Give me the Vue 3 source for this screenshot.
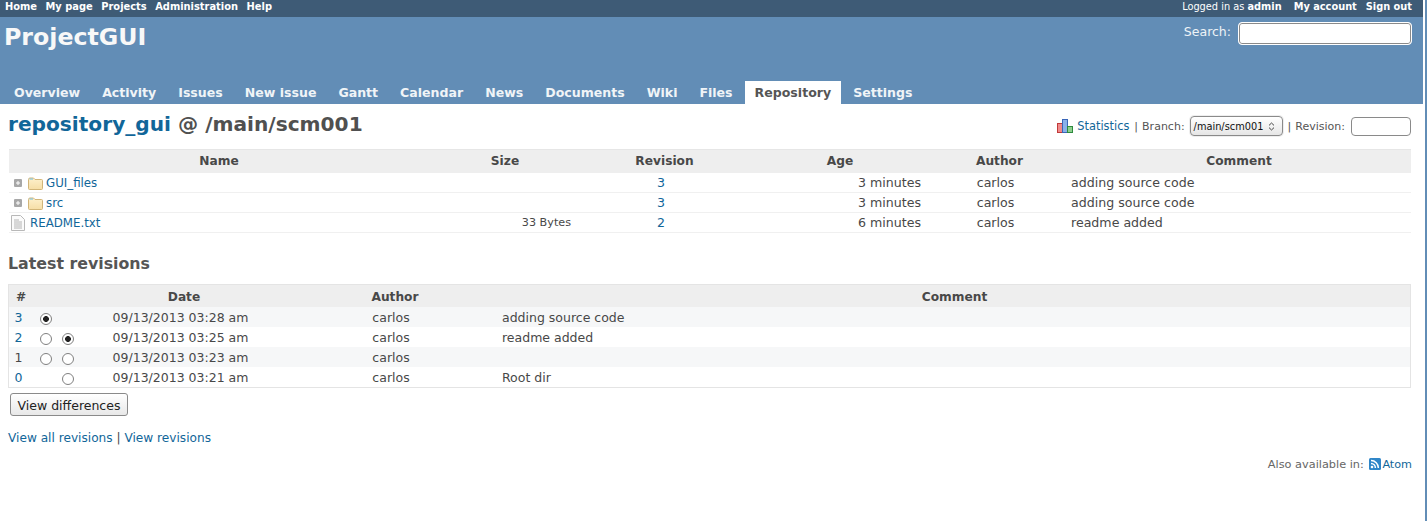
<script setup>
const tabs = ['Overview','Activity','Issues','New issue','Gantt','Calendar','News','Documents','Wiki','Files','Repository','Settings']
const entries = [
  { name:'GUI_files', dir:true, size:'', rev:'3', age:'3 minutes', author:'carlos', comment:'adding source code' },
  { name:'src', dir:true, size:'', rev:'3', age:'3 minutes', author:'carlos', comment:'adding source code' },
  { name:'README.txt', dir:false, size:'33 Bytes', rev:'2', age:'6 minutes', author:'carlos', comment:'readme added' },
]
const revs = [
  { id:'3', link:true, a:'on', b:'', date:'09/13/2013 03:28 am', comment:'adding source code' },
  { id:'2', link:true, a:'off', b:'on', date:'09/13/2013 03:25 am', comment:'readme added' },
  { id:'1', link:false, a:'off', b:'off', date:'09/13/2013 03:23 am', comment:'' },
  { id:'0', link:true, a:'', b:'off', date:'09/13/2013 03:21 am', comment:'Root dir' },
]
</script>

<template>
  <div class="page">
    <div class="main">
      <div class="topmenu">
        <div class="tm-left"><a>Home</a><a>My page</a><a>Projects</a><a>Administration</a><a>Help</a></div>
        <div class="tm-right"><span class="logged">Logged in as <b>admin</b></span><a>My account</a><a>Sign out</a></div>
      </div>
      <div class="header">
        <div class="head-row">
          <h1>ProjectGUI</h1>
          <div class="search"><span>Search:</span><span class="search-input"></span></div>
        </div>
        <div class="tabs">
          <a v-for="t in tabs" :key="t" :class="{ sel: t === 'Repository' }">{{ t }}</a>
        </div>
      </div>
      <div class="content">
        <div class="title-row">
          <h2><a>repository_gui</a> @ /main/scm001</h2>
          <div class="ctx">
            <svg class="stat" width="16" height="16" viewBox="0 0 16 16">
              <rect x="0.5" y="5.5" width="5" height="9" fill="#f08a8a" stroke="#c03a3a"/>
              <rect x="5.5" y="1.5" width="5" height="13" fill="#8ab0ea" stroke="#3a66b8"/>
              <rect x="10.5" y="8.5" width="5" height="6" fill="#8ed08e" stroke="#2e8a3e"/>
            </svg>
            <a class="stat-link">Statistics</a><span class="sep">|</span><span>Branch:</span>
            <span class="select">/main/scm001<svg width="7" height="9" viewBox="0 0 7 9"><path d="M1 3.4 3.5 1 6 3.4M1 5.6 3.5 8 6 5.6" fill="none" stroke="#444" stroke-width="1"/></svg></span>
            <span class="sep">|</span><span>Revision:</span><span class="rev-input"></span>
          </div>
        </div>

        <table class="entries">
          <colgroup><col style="width:420px"><col style="width:152px"><col style="width:167px"><col style="width:184px"><col style="width:135px"><col></colgroup>
          <thead><tr><th>Name</th><th>Size</th><th>Revision</th><th>Age</th><th>Author</th><th>Comment</th></tr></thead>
          <tbody>
            <tr v-for="e in entries" :key="e.name">
              <td>
                <div class="fname">
                  <template v-if="e.dir">
                    <svg class="exp" width="8" height="8" viewBox="0 0 8 8"><rect width="8" height="8" rx="1" fill="#a8a8a8"/><path d="M2 4h4M4 2v4" stroke="#fff" stroke-width="1"/></svg>
                    <svg class="folder" width="15" height="13" viewBox="0 0 15 13"><defs><linearGradient id="fg" x1="0" y1="0" x2="0" y2="1"><stop offset="0" stop-color="#fdf0cc"/><stop offset="1" stop-color="#f6deA6"/></linearGradient></defs><path d="M.5 2.5 Q.5 1 2 1H5.5L7 2.5H13.5Q14.5 2.5 14.5 3.5V11.5Q14.5 12.5 13.5 12.5H1.5Q.5 12.5 .5 11.5Z" fill="url(#fg)" stroke="#d2b578"/><path d="M1.5 2H5" stroke="#6cc0e8" stroke-width="1"/></svg>
                    <a>{{ e.name }}</a>
                  </template>
                  <template v-else>
                    <svg class="file" width="14" height="16" viewBox="0 0 14 16"><path d="M.5 .5H9.5L13.5 4.5V15.5H.5Z" fill="#fbfbfb" stroke="#b8b8b8"/><path d="M3 5H8M3 7H11M3 9H11M3 11H11M3 13H11" stroke="#b4b4b4"/></svg>
                    <a>{{ e.name }}</a>
                  </template>
                </div>
              </td>
              <td class="size">{{ e.size }}</td>
              <td class="rev"><a>{{ e.rev }}</a></td>
              <td class="age">{{ e.age }}</td>
              <td class="author">{{ e.author }}</td>
              <td class="comment">{{ e.comment }}</td>
            </tr>
          </tbody>
        </table>

        <h3>Latest revisions</h3>

        <div class="revbox">
          <table class="revisions">
            <colgroup><col style="width:24px"><col style="width:26px"><col style="width:18px"><col style="width:214px"><col style="width:208px"><col></colgroup>
            <thead><tr><th>#</th><th></th><th></th><th>Date</th><th>Author</th><th>Comment</th></tr></thead>
            <tbody>
              <tr v-for="(r,i) in revs" :key="r.id" :class="i % 2 ? 'even' : 'odd'">
                <td class="rid"><a v-if="r.link">{{ r.id }}</a><template v-else>{{ r.id }}</template></td>
                <td class="rc"><span v-if="r.a" class="radio" :class="r.a"></span></td>
                <td class="rc"><span v-if="r.b" class="radio" :class="r.b"></span></td>
                <td class="date">{{ r.date }}</td>
                <td class="rauthor">carlos</td>
                <td class="rcomment">{{ r.comment }}</td>
              </tr>
            </tbody>
          </table>
        </div>

        <div class="btn-row"><span class="btn">View differences</span></div>
        <p class="links"><a>View all revisions</a> | <a>View revisions</a></p>
        <p class="other">Also available in:
          <svg class="atom" width="12" height="12" viewBox="0 0 12 12"><rect width="12" height="12" rx="1.5" fill="#2f86c8"/><circle cx="3" cy="9" r="1.3" fill="#fff"/><path d="M2 5.6A4.4 4.4 0 0 1 6.4 10M2 2.6A7.4 7.4 0 0 1 9.4 10" fill="none" stroke="#fff" stroke-width="1.5"/></svg>
          <a class="atom-link">Atom</a></p>
      </div>
    </div>
    <div class="edge"></div>
  </div>
</template>

<style>
html, body { margin: 0; background: #fff; overflow: hidden; }
</style>

<style scoped>
.page { display: flex; width: 1427px; height: 521px; overflow: hidden; font-family: "DejaVu Sans", sans-serif; font-size: 12px; color: #484848; background: #fff; }
.main { width: 1423px; flex: none; }
.edge { margin-left: 2px; width: 2px; background: #628db6; flex: none; }
a { color: #116699; }
.topmenu { height: 17px; background: #3e5b76; color: #fff; display: flex; justify-content: space-between; font-size: 9.9px; line-height: 13px; padding: 0 11px 0 5px; box-sizing: border-box; }
.topmenu a { color: #fff; font-weight: bold; }
.tm-left { display: flex; gap: 8.5px; }
.tm-right { display: flex; gap: 9px; font-size: 9.8px; }
.logged { margin-right: 3px; }
.header { height: 87px; background: #628db6; display: flex; flex-direction: column; justify-content: space-between; }
.head-row { display: flex; justify-content: space-between; }
h1 { margin: 4px 0 0 4px; font-size: 23.7px; line-height: 33px; color: #f8f8f8; font-weight: bold; }
.search { display: flex; align-items: center; gap: 7px; margin: 5px 11px 0 0; color: #eef3f7; font-size: 12.5px; height: 23px; }
.search span:first-child { position: relative; top: -2px; }
.search-input { display: block; width: 172px; height: 21px; background: #fff; border: 1px solid #fff; box-shadow: inset 0 0 0 1px #8a8a8a; border-radius: 4px; }
.tabs { display: flex; padding-left: 4px; gap: 2px; height: 23px; }
.tabs a { padding: 0 10px; color: #f0f4f7; font-weight: bold; font-size: 12.55px; line-height: 23px; }
.tabs a.sel { background: #fff; color: #555; }
.title-row { display: flex; justify-content: space-between; height: 45px; }
h2 { margin: 6px 0 0 8px; font-size: 20.15px; line-height: 28px; color: #505050; font-weight: bold; }
h2 a { color: #116699; }
.ctx { display: flex; align-items: center; height: 20px; margin: 12px 12px 0 0; font-size: 11px; color: #555; }
.stat { margin-right: 4px; }
.stat-link { margin-right: 5px; font-size: 11.4px; }
.sep { margin: 0 4px 0 0; }
.select { display: flex; align-items: center; justify-content: space-between; box-sizing: border-box; width: 93px; height: 20px; margin: 0 5px; padding: 0 7px 0 3px; border: 1px solid #8a8a8a; border-radius: 4px; color: #111; font-size: 9.8px; background: linear-gradient(#fff, #e6e6e6); box-shadow: 0 0 0 1px #eee; }
.rev-input { display: block; box-sizing: border-box; width: 60px; height: 19px; margin-left: 6px; border: 1px solid #8a8a8a; border-radius: 4px; background: #fff; }
table { border-collapse: collapse; table-layout: fixed; width: 1402px; }
.entries { margin-left: 9px; border-top: 1px solid #e6e6e6; }
th { background: #eee; font-size: 12.2px; font-weight: bold; color: #484848; padding: 0; }
.entries th { height: 21px; padding-bottom: 2px; }
.entries td { height: 19px; padding: 0; font-size: 12.6px; border-bottom: 1px solid #f0f0f0; }
.fname { display: flex; align-items: center; height: 19px; font-size: 11.8px; }
.fname a { margin-top: 1px; }
.exp { margin: 1px 6px 0 5px; flex: none; }
.folder { margin: 1px 3px 0 0; flex: none; }
.file { margin: 1px 5px 0 2px; flex: none; }
.entries td.size { text-align: right; padding-right: 10px; font-size: 11.2px; }
.rev { text-align: center; padding-right: 7px !important; }
.age { text-align: right; padding-right: 11px !important; }
.author { text-align: center; padding-right: 8px !important; }
.comment { padding-left: 4px !important; }
h3 { margin: 21px 0 0 8px; font-size: 15.8px; line-height: 20px; color: #555; font-weight: bold; }
.revbox { margin: 10px 0 0 8px; width: 1403px; box-sizing: border-box; border: 1px solid #e4e4e4; }
.revisions { width: 1401px; }
.revisions th { height: 21px; padding-top: 1px; }
.revisions td { height: 19px; padding: 1px 0 0; font-size: 12.5px; }
.odd { background: #f6f7f8; }
.even { background: #fff; }
.revisions td.rid { text-align: center; padding-right: 5px; }
.rc { text-align: center; vertical-align: middle; }
.radio { display: inline-block; box-sizing: border-box; width: 12px; height: 12px; border: 1px solid #808080; border-radius: 50%; background: #fff; vertical-align: middle; }
.radio.on { background: radial-gradient(circle, #222 0 2.6px, #fff 3.2px); }
.revisions td.date { text-align: center; padding-right: 7px; }
.revisions td.rauthor { text-align: center; padding-right: 8px; }
.revisions td.rcomment { padding-left: 3px; }
.btn-row { margin: 5px 0 0 10px; }
.btn { display: block; box-sizing: border-box; width: 118px; height: 23px; line-height: 23px; text-align: center; font-size: 12.5px; color: #222; border: 1px solid #8a8a8a; border-radius: 3px; background: linear-gradient(#fff, #e8e8e8); }
.links { margin: 15px 0 0 8px; line-height: 14px; font-size: 12.15px; }
.other { margin: 13px 11px 0 0; text-align: right; font-size: 11.3px; line-height: 14px; color: #666; }
.atom { vertical-align: -2px; margin: 0 1px 0 2px; }
.atom-link { font-size: 11.2px; }
</style>
